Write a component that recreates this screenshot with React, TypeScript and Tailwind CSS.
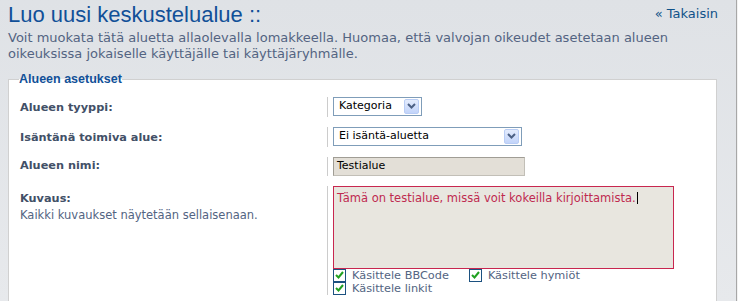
import React from "react";

function SelectArrow() {
  return (
    <span className="flex h-[15px] w-[15px] items-center justify-center rounded-[2px] border border-[#b9cdf5] bg-gradient-to-b from-[#e4ecfd] to-[#c2d4fa]">
      <svg width="9" height="6" viewBox="0 0 9 6">
        <path d="M1 1l3.5 3.5L8 1" fill="none" stroke="#4d6185" strokeWidth="2" />
      </svg>
    </span>
  );
}

function Select({ value, width }: { value: string; width: string }) {
  return (
    <div
      className={`flex h-[19px] ${width} items-center justify-between border border-[#7f9db9] bg-white pl-[5px] pr-[2px] text-[11px] text-black`}
    >
      <span>{value}</span>
      <SelectArrow />
    </div>
  );
}

function Check({ label }: { label: string }) {
  return (
    <label className="flex items-center gap-[6px]">
      <span className="flex h-[13px] w-[13px] items-center justify-center border border-[#1c5180] bg-white">
        <svg width="9" height="8" viewBox="0 0 9 8">
          <path d="M1 4l2.5 2.5L8 1" fill="none" stroke="#21a121" strokeWidth="2" />
        </svg>
      </span>
      <span>{label}</span>
    </label>
  );
}

export default function App() {
  return (
    <div className="flex h-[301px] w-[738px] overflow-hidden bg-gradient-to-b from-[#dfe2e6] to-[#e7e9ec] font-['DejaVu_Sans',sans-serif] text-[11px] text-[#536482]">
      <div className="flex-1 pl-[8px] pr-[19px]">
        {/* Header */}
        <div className="flex items-start justify-between pt-[3px]">
          <h1 className="font-['Liberation_Sans',Arial,sans-serif] text-[22px] leading-[24px] text-[#115098]">
            Luo uusi keskustelualue ::
          </h1>
          <a className="mt-[1px] mr-[-1px] text-[13px] text-[#105289]">« Takaisin</a>
        </div>
        <p className="mt-[3px] text-[13px] leading-[16px]">
          Voit muokata tätä aluetta allaolevalla lomakkeella. Huomaa, että valvojan oikeudet asetetaan alueen
          oikeuksissa jokaiselle käyttäjälle tai käyttäjäryhmälle.
        </p>

        {/* Settings */}
        <fieldset className="mt-[8px] h-[260px] border border-[#d0d0d0] bg-white pt-[8px]">
          <legend className="ml-[10px] font-['Liberation_Sans',Arial,sans-serif] text-[12.5px] font-bold text-[#115098]">
            Alueen asetukset
          </legend>

          <div className="flex flex-col gap-[10px]">
            <div className="flex">
              <div className="w-[319px] border-r border-[#cccccc] pl-[11px] pt-[3px] text-[11.3px] font-bold text-[#425067]">
                Alueen tyyppi:
              </div>
              <div className="pl-[5px]">
                <Select value="Kategoria" width="w-[89px]" />
              </div>
            </div>

            <div className="flex">
              <div className="w-[319px] border-r border-[#cccccc] pl-[11px] pt-[3px] text-[11.3px] font-bold text-[#425067]">
                Isäntänä toimiva alue:
              </div>
              <div className="pl-[5px]">
                <Select value="Ei isäntä-aluetta" width="w-[189px]" />
              </div>
            </div>

            <div className="flex">
              <div className="w-[319px] border-r border-[#cccccc] pl-[11px] pt-[1px] text-[11.3px] font-bold text-[#425067]">
                Alueen nimi:
              </div>
              <div className="pl-[5px]">
                <div className="flex h-[19px] w-[192px] items-center border border-[#c2bfb7] border-t-[#a09d95] border-l-[#a09d95] bg-[#e3dfd7] pl-[3px] text-[11px] font-normal text-black">
                  Testialue
                </div>
              </div>
            </div>

            <div className="flex">
              <div className="w-[319px] border-r border-[#cccccc] pl-[11px] pt-[5px]">
                <div className="text-[11.3px] font-bold text-[#425067]">Kuvaus:</div>
                <div className="text-[11.5px] leading-[14px]">Kaikki kuvaukset näytetään sellaisenaan.</div>
              </div>
              <div className="pl-[5px]">
                <div className="h-[83px] w-[341px] border border-[#c8264f] bg-[#e8e6df] px-[3px] pt-[3px] text-[11.5px] text-[#bf2a50]">
                  Tämä on testialue, missä voit kokeilla kirjoittamista.
                  <span className="ml-px inline-block h-[12px] w-px translate-y-[2px] bg-black" />
                </div>
                <div className="flex flex-col text-[11.3px] leading-[13px]">
                  <div className="flex gap-[20px]">
                    <Check label="Käsittele BBCode" />
                    <Check label="Käsittele hymiöt" />
                  </div>
                  <Check label="Käsittele linkit" />
                </div>
              </div>
            </div>
          </div>
        </fieldset>
      </div>
      <div className="w-px bg-[#a7a7a7]" />
      <div className="w-px bg-[#f2f2f2]" />
    </div>
  );
}
